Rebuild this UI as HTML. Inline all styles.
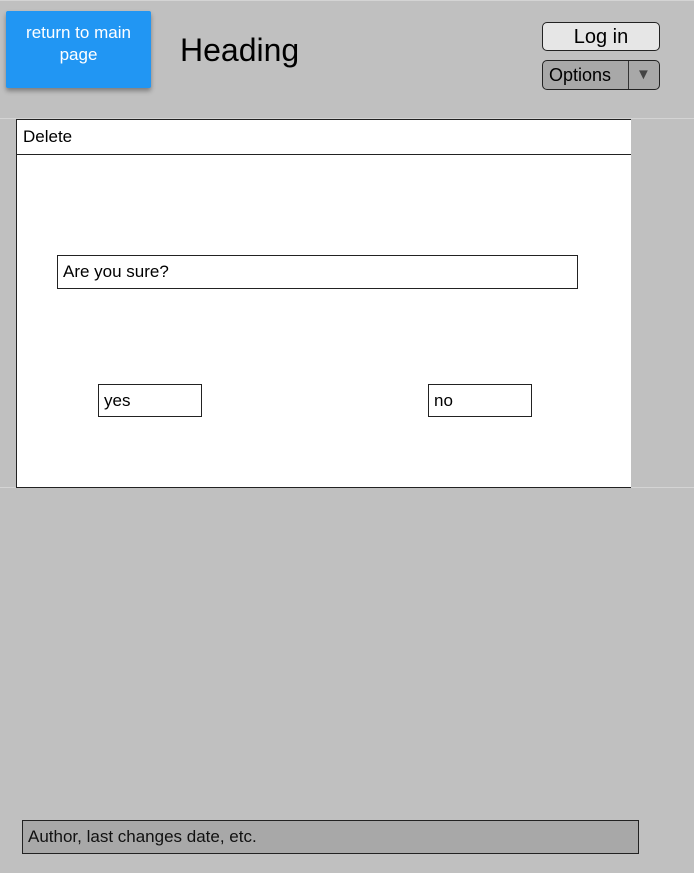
<!DOCTYPE html>
<html><head><style>
*{box-sizing:border-box;margin:0;padding:0}
body{width:694px;height:873px;background:#c0c0c0;position:relative;overflow:hidden;font-family:"Liberation Sans",sans-serif;color:#000}
.a{position:absolute}
.line{position:absolute;left:0;width:694px;height:1px;background:#d4d4d4}
.box{position:absolute;border:1px solid #222;background:#fff;font-size:17px;padding-left:5px;display:flex;align-items:center}
</style></head><body>
<div class="line" style="top:0"></div>
<div class="line" style="top:118px"></div>
<div class="line" style="top:487px"></div>
<div class="a" style="left:6px;top:11px;width:145px;height:77px;background:#2196f3;border-radius:2px;box-shadow:0 3px 5px rgba(0,0,0,.35);color:#fff;font-size:17px;text-align:center;line-height:22px;padding-top:11px">return to main<br>page</div>
<div class="a" style="left:180px;top:31px;font-size:32px;line-height:38px">Heading</div>
<div class="a" style="left:542px;top:22px;width:118px;height:29px;border:1px solid #222;border-radius:5px;background:#e6e6e6;font-size:20px;text-align:center;line-height:28px">Log in</div>
<div class="a" style="left:542px;top:60px;width:118px;height:30px;border:1px solid #222;border-radius:5px;background:#a8a8a8;font-size:18px;line-height:28px;padding-left:6px">Options
<div class="a" style="left:85px;top:0;width:1px;height:28px;background:#333"></div>
<div class="a" style="left:93px;top:0;font-size:15px;color:#444">▼</div></div>
<div class="a" style="left:16px;top:119px;width:615px;height:369px;background:#fff;border-left:1px solid #222;border-top:1px solid #222;border-bottom:1px solid #222"></div>
<div class="a" style="left:16px;top:154px;width:615px;height:1px;background:#222"></div>
<div class="a" style="left:23px;top:127px;font-size:17px">Delete</div>
<div class="box" style="left:57px;top:255px;width:521px;height:34px">Are you sure?</div>
<div class="box" style="left:98px;top:384px;width:104px;height:33px">yes</div>
<div class="box" style="left:428px;top:384px;width:104px;height:33px">no</div>
<div class="box" style="left:22px;top:820px;width:617px;height:34px;background:#a8a8a8;color:#111">Author, last changes date, etc.</div>
</body></html>
